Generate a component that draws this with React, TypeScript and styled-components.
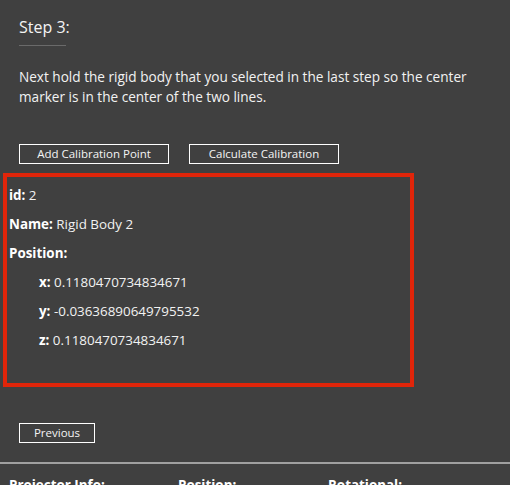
import React from "react";
import styled, { createGlobalStyle } from "styled-components";

const Global = createGlobalStyle`
  html, body { margin: 0; padding: 0; background: #404040; }
  body { font-family: "Open Sans", "Noto Sans", sans-serif; color: #ffffff; overflow: hidden; }
`;

const Page = styled.div`
  width: 510px;
  height: 485px;
  display: flex;
  flex-direction: column;
  background: #404040;
  overflow: hidden;
  & > * { flex-shrink: 0; }
`;

const Content = styled.div`
  padding: 0 19px;
  display: flex;
  flex-direction: column;
`;

const Title = styled.h2`
  margin: 17px 0 0;
  font-size: 16px;
  font-weight: 400;
  line-height: 20px;
  color: #f4f4f4;
`;

const Rule = styled.div`
  width: 47px;
  height: 1px;
  background: #6a6a6a;
  margin-top: 8px;
`;

const Paragraph = styled.p`
  margin: 21px 0 0;
  font-size: 13.6px;
  line-height: 20px;
  color: #f2f2f2;
`;

const ButtonRow = styled.div`
  display: flex;
  gap: 20px;
  margin-top: 37px;
`;

const Button = styled.button<{ $w: number }>`
  width: ${(p) => p.$w}px;
  height: 20px;
  padding: 0;
  background: transparent;
  border: 1px solid #ffffff;
  color: #f4f4f4;
  font-family: "Open Sans", "Noto Sans", sans-serif;
  font-size: 11.5px;
  line-height: 18px;
`;

const InfoBox = styled.div`
  margin: 9px 96px 0 3px;
  height: 214px;
  box-sizing: border-box;
  border: 4px solid #e0250a;
  padding: 8px 2px 0;
  display: flex;
  flex-direction: column;
  gap: 9px;
`;

const Field = styled.div<{ $indent?: boolean }>`
  font-size: 13.4px;
  line-height: 20px;
  color: #f2f2f2;
  padding-left: ${(p) => (p.$indent ? 30 : 0)}px;
  b { font-weight: 700; color: #ffffff; }
`;

const Bottom = styled.div`
  display: flex;
  padding: 36px 19px 0;
`;

const Divider = styled.div`
  height: 2px;
  background: #a0a0a0;
  margin-top: 19px;
`;

const Footer = styled.div`
  display: grid;
  grid-template-columns: 169px 150px 1fr;
  padding: 11px 9px 0;
  font-size: 13.4px;
  font-weight: 700;
  line-height: 20px;
`;

export default function App() {
  return (
    <Page>
      <Global />
      <Content>
        <Title>Step 3:</Title>
        <Rule />
        <Paragraph>
          Next hold the rigid body that you selected in the last step so the center
          <br />
          marker is in the center of the two lines.
        </Paragraph>
        <ButtonRow>
          <Button $w={150}>Add Calibration Point</Button>
          <Button $w={150}>Calculate Calibration</Button>
        </ButtonRow>
      </Content>
      <InfoBox>
        <Field><b>id:</b> 2</Field>
        <Field><b>Name:</b> Rigid Body 2</Field>
        <Field><b>Position:</b></Field>
        <Field $indent><b>x:</b> 0.1180470734834671</Field>
        <Field $indent><b>y:</b> -0.03636890649795532</Field>
        <Field $indent><b>z:</b> 0.1180470734834671</Field>
      </InfoBox>
      <Bottom>
        <Button $w={76}>Previous</Button>
      </Bottom>
      <Divider />
      <Footer>
        <span>Projector Info:</span>
        <span>Position:</span>
        <span>Rotational:</span>
      </Footer>
    </Page>
  );
}
